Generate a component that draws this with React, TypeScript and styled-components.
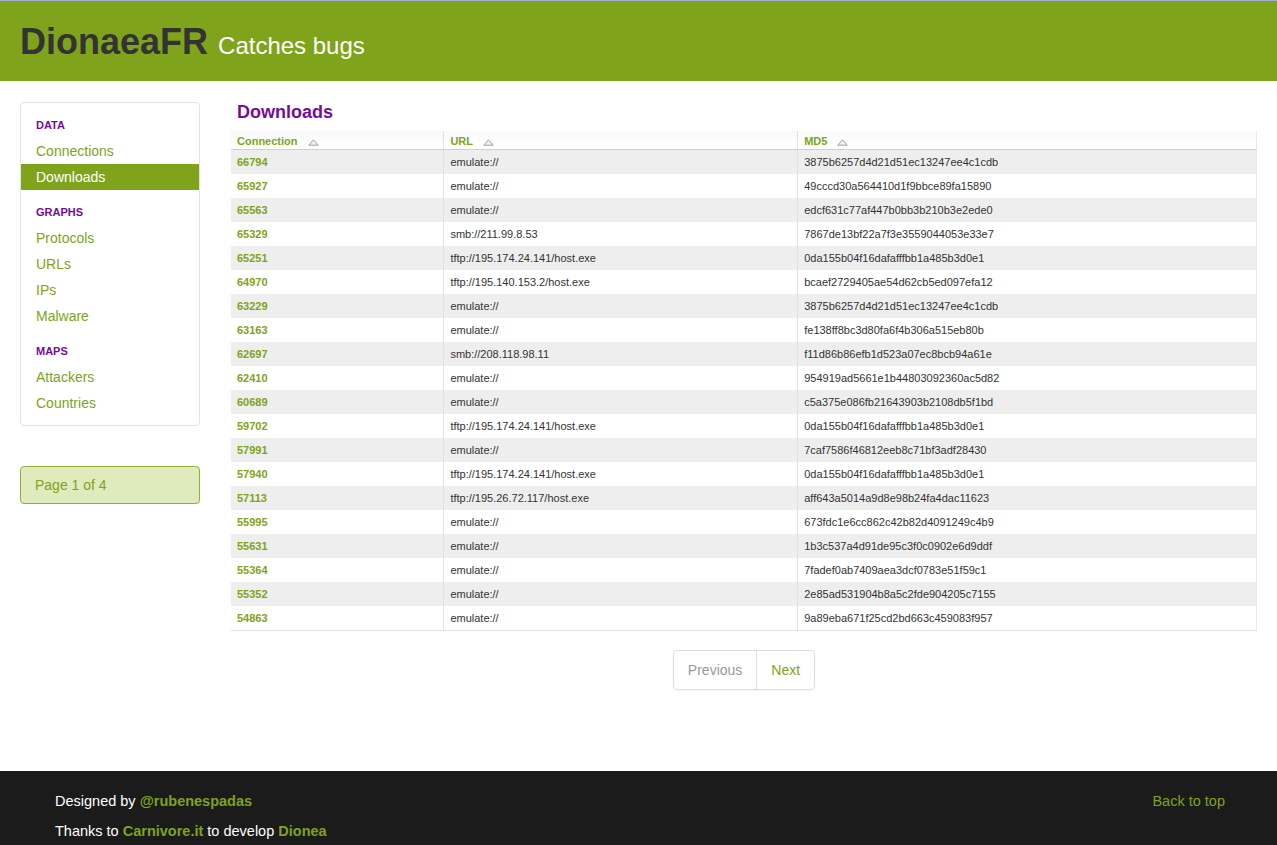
import React from "react";
import styled, { createGlobalStyle } from "styled-components";

const GREEN = "#7fa31a";
const PURPLE = "#770b99";

const Global = createGlobalStyle`
  html, body { margin: 0; padding: 0; background: #fff; }
  body { font-family: "Liberation Sans", Arial, sans-serif; font-size: 14px; color: #333; }
  * { box-sizing: border-box; }
  a { text-decoration: none; }
`;

const Header = styled.header`
  height: 81px;
  background: ${GREEN};
  border-top: 1px solid #9eaecf;
  padding: 21px 20px 0;
`;

const Brand = styled.h1`
  margin: 0;
  font-size: 36px;
  line-height: 40px;
  font-weight: bold;
  color: #333;
`;

const Tagline = styled.span`
  font-size: 24px;
  font-weight: normal;
  color: #fff;
`;

const Body = styled.div`
  display: flex;
  gap: 31px;
  padding: 21px 20px 81px;
`;

const Aside = styled.aside`
  width: 180px;
  flex: none;
  display: flex;
  flex-direction: column;
  gap: 40px;
`;

const SideNav = styled.nav`
  border: 1px solid #e3e3e3;
  border-radius: 4px;
  padding: 9px 0;
  background: #fff;
`;

const NavHeader = styled.div<{ $first?: boolean }>`
  padding: 3px 15px;
  line-height: 20px;
  font-size: 11px;
  font-weight: bold;
  text-transform: uppercase;
  color: ${PURPLE};
  margin-top: ${(p) => (p.$first ? 0 : 9)}px;
`;

const NavItem = styled.a<{ $active?: boolean }>`
  display: block;
  padding: 3px 15px;
  line-height: 20px;
  font-size: 14px;
  color: ${(p) => (p.$active ? "#fff" : GREEN)};
  background: ${(p) => (p.$active ? GREEN : "transparent")};
`;

const PageBox = styled.div`
  padding: 8px 14px;
  line-height: 20px;
  background: #dfeabd;
  border: 1px solid #8fb034;
  border-radius: 4px;
  color: ${GREEN};
  font-size: 14px;
`;

const Main = styled.main`
  flex: 1;
  min-width: 0;
`;

const Title = styled.h2`
  margin: 0 0 8px 6px;
  font-size: 18px;
  line-height: 21px;
  font-weight: bold;
  color: ${PURPLE};
`;

const Table = styled.table`
  width: 100%;
  border-collapse: collapse;
  font-size: 11px;
  border-right: 1px solid #eaeaea;
  border-bottom: 1px solid #e2e2e2;
`;

const Th = styled.th<{ $w: number }>`
  width: ${(p) => p.$w}px;
  text-align: left;
  padding: 3px 6px 0;
  height: 18px;
  line-height: 15px;
  font-weight: bold;
  color: ${GREEN};
  background: linear-gradient(#f9f9f9, #fff);
  border-bottom: 1px solid #d0d0d0;
  vertical-align: middle;
  & + & { border-left: 1px solid #e2e2e2; }
`;

const SortIcon = styled.svg`
  margin-left: 10px;
  vertical-align: -1px;
`;

const Tr = styled.tr<{ $odd: boolean }>`
  background: ${(p) => (p.$odd ? "#eeeeee" : "#fff")};
`;

const Td = styled.td<{ $id?: boolean }>`
  height: 24px;
  padding: 0 6px;
  line-height: 24px;
  color: ${(p) => (p.$id ? GREEN : "#333")};
  font-weight: ${(p) => (p.$id ? "bold" : "normal")};
  & + & { border-left: 1px solid #e2e2e2; }
`;

const PagerWrap = styled.div`
  display: flex;
  justify-content: center;
  margin-top: 19px;
`;

const Pager = styled.div`
  display: flex;
  border: 1px solid #dddddd;
  border-radius: 4px;
  box-shadow: 0 1px 2px rgba(0, 0, 0, 0.05);
`;

const PagerLink = styled.a<{ $disabled?: boolean }>`
  padding: 9px 14px;
  line-height: 20px;
  font-size: 14px;
  color: ${(p) => (p.$disabled ? "#999" : GREEN)};
  & + & { border-left: 1px solid #dddddd; }
`;

const Footer = styled.footer`
  background: #1b1b1b;
  padding: 20px 0;
  color: #fff;
`;

const FooterInner = styled.div`
  margin: 0 52px 0 55px;
  display: flex;
  justify-content: space-between;
  align-items: flex-start;
  font-size: 14.5px;
`;

const FooterLine = styled.p`
  margin: 0 0 10px;
  line-height: 20px;
`;

const FooterLink = styled.a`
  color: ${GREEN};
  font-weight: bold;
`;

const BackTop = styled.a`
  color: ${GREEN};
  line-height: 20px;
`;

const rows: [string, string, string][] = [
  ["66794", "emulate://", "3875b6257d4d21d51ec13247ee4c1cdb"],
  ["65927", "emulate://", "49cccd30a564410d1f9bbce89fa15890"],
  ["65563", "emulate://", "edcf631c77af447b0bb3b210b3e2ede0"],
  ["65329", "smb://211.99.8.53", "7867de13bf22a7f3e3559044053e33e7"],
  ["65251", "tftp://195.174.24.141/host.exe", "0da155b04f16dafafffbb1a485b3d0e1"],
  ["64970", "tftp://195.140.153.2/host.exe", "bcaef2729405ae54d62cb5ed097efa12"],
  ["63229", "emulate://", "3875b6257d4d21d51ec13247ee4c1cdb"],
  ["63163", "emulate://", "fe138ff8bc3d80fa6f4b306a515eb80b"],
  ["62697", "smb://208.118.98.11", "f11d86b86efb1d523a07ec8bcb94a61e"],
  ["62410", "emulate://", "954919ad5661e1b44803092360ac5d82"],
  ["60689", "emulate://", "c5a375e086fb21643903b2108db5f1bd"],
  ["59702", "tftp://195.174.24.141/host.exe", "0da155b04f16dafafffbb1a485b3d0e1"],
  ["57991", "emulate://", "7caf7586f46812eeb8c71bf3adf28430"],
  ["57940", "tftp://195.174.24.141/host.exe", "0da155b04f16dafafffbb1a485b3d0e1"],
  ["57113", "tftp://195.26.72.117/host.exe", "aff643a5014a9d8e98b24fa4dac11623"],
  ["55995", "emulate://", "673fdc1e6cc862c42b82d4091249c4b9"],
  ["55631", "emulate://", "1b3c537a4d91de95c3f0c0902e6d9ddf"],
  ["55364", "emulate://", "7fadef0ab7409aea3dcf0783e51f59c1"],
  ["55352", "emulate://", "2e85ad531904b8a5c2fde904205c7155"],
  ["54863", "emulate://", "9a89eba671f25cd2bd663c459083f957"],
];

const Sort = () => (
  <SortIcon width="11" height="7" viewBox="0 0 11 7">
    <polygon points="5.5,0.8 10.2,6.2 0.8,6.2" fill="#f0f0f0" stroke="#a0a0a0" strokeWidth="1" />
  </SortIcon>
);

export default function App() {
  return (
    <>
      <Global />
      <Header>
        <Brand>
          DionaeaFR <Tagline>Catches bugs</Tagline>
        </Brand>
      </Header>
      <Body>
        <Aside>
          <SideNav>
            <NavHeader $first>Data</NavHeader>
            <NavItem href="#">Connections</NavItem>
            <NavItem href="#" $active>Downloads</NavItem>
            <NavHeader>Graphs</NavHeader>
            <NavItem href="#">Protocols</NavItem>
            <NavItem href="#">URLs</NavItem>
            <NavItem href="#">IPs</NavItem>
            <NavItem href="#">Malware</NavItem>
            <NavHeader>Maps</NavHeader>
            <NavItem href="#">Attackers</NavItem>
            <NavItem href="#">Countries</NavItem>
          </SideNav>
          <PageBox>Page 1 of 4</PageBox>
        </Aside>
        <Main>
          <Title>Downloads</Title>
          <Table>
            <thead>
              <tr>
                <Th $w={213}>Connection<Sort /></Th>
                <Th $w={354}>URL<Sort /></Th>
                <Th $w={459}>MD5<Sort /></Th>
              </tr>
            </thead>
            <tbody>
              {rows.map((r, i) => (
                <Tr key={i} $odd={i % 2 === 0}>
                  <Td $id>{r[0]}</Td>
                  <Td>{r[1]}</Td>
                  <Td>{r[2]}</Td>
                </Tr>
              ))}
            </tbody>
          </Table>
          <PagerWrap>
            <Pager>
              <PagerLink $disabled>Previous</PagerLink>
              <PagerLink href="#">Next</PagerLink>
            </Pager>
          </PagerWrap>
        </Main>
      </Body>
      <Footer>
        <FooterInner>
          <div>
            <FooterLine>
              Designed by <FooterLink href="#">@rubenespadas</FooterLink>
            </FooterLine>
            <FooterLine>
              Thanks to <FooterLink href="#">Carnivore.it</FooterLink> to develop <FooterLink href="#">Dionea</FooterLink>
            </FooterLine>
          </div>
          <BackTop href="#">Back to top</BackTop>
        </FooterInner>
      </Footer>
    </>
  );
}
